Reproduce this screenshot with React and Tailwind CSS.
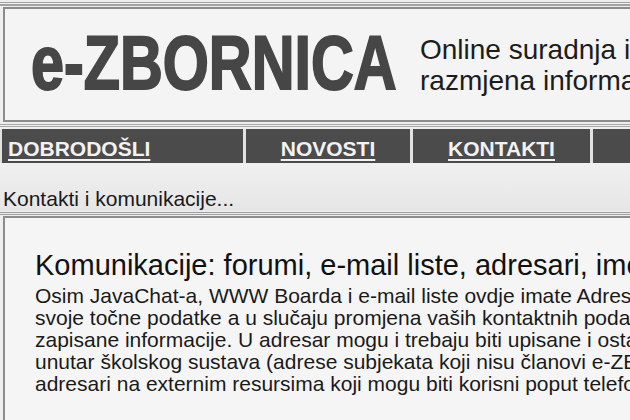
export default function App() {
  const navItems = [
    { label: 'DOBRODOŠLI', width: 'w-[241px]', align: 'justify-start pl-[6px]' },
    { label: 'NOVOSTI', width: 'w-[164px]', align: 'justify-center' },
    { label: 'KONTAKTI', width: 'w-[177px]', align: 'justify-center' },
    { label: 'O NAMA', width: 'w-[200px]', align: 'justify-center' },
  ];

  return (
    <div className="w-[630px] h-[420px] overflow-hidden bg-[#eeeeee] font-['Liberation_Sans',Arial,sans-serif]">
      <div className="w-[1000px]">
        {/* top rule */}
        <div className="h-[7px] pt-[2px]">
          <div className="h-[4px] border-t border-b-2 border-[#a3a3a3]" />
        </div>

        {/* header */}
        <div className="ml-[3px] h-[115px] border-2 border-r-0 border-[#8c8c8c] bg-[#f4f4f4] flex items-start">
          <div className="w-[415px] pl-[26px] pt-[16px] shrink-0">
            <div className="origin-left scale-x-[0.78] text-[76px] leading-[76px] font-bold text-[#464646] [-webkit-text-stroke:2px_#464646] whitespace-nowrap">
              e-ZBORNICA
            </div>
          </div>
          <div className="pt-[25px] text-[28px] leading-[31px] text-[#1c1c1c] whitespace-nowrap">
            <div>Online suradnja i</div>
            <div>razmjena informacija</div>
          </div>
        </div>

        {/* rule under header */}
        <div className="h-[7px] pt-[2px]">
          <div className="h-[3px] border-t border-b border-[#a8a8a8]" />
        </div>

        {/* navigation */}
        <div className="flex gap-[3px] pl-[2px] bg-[#e2e2e2]">
          {navItems.map((item) => (
            <div
              key={item.label}
              className={`${item.width} h-[34px] bg-[#4b4b4b] flex items-center ${item.align} pt-[5px]`}
            >
              <span className="text-[21px] leading-[24px] font-bold text-[#f2f2f2] underline decoration-2 underline-offset-[3px]">
                {item.label}
              </span>
            </div>
          ))}
        </div>

        {/* breadcrumb band */}
        <div className="h-[48px] bg-gradient-to-b from-[#f0f0f0] to-[#e6e6e6] flex items-end pl-[3px]">
          <span className="text-[21px] leading-[24px] text-[#1a1a1a]">Kontakti i komunikacije...</span>
        </div>

        {/* rule */}
        <div className="h-[5px] pt-[1px]">
          <div className="h-[3px] border-t border-b border-[#9c9c9c]" />
        </div>

        {/* content */}
        <div className="ml-[3px] h-[300px] border-2 border-r-0 border-b-0 border-[#8c8c8c] bg-[#f5f5f5] pl-[30px] pt-[31px]">
          <h1 className="mb-[4px] text-[29px] leading-[32px] text-[#111] whitespace-nowrap">
            Komunikacije: forumi, e-mail liste, adresari, imenici
          </h1>
          <div className="text-[21px] leading-[22px] text-[#1a1a1a] whitespace-nowrap">
            <div>Osim JavaChat-a, WWW Boarda i e-mail liste ovdje imate Adresar u koji upisujete</div>
            <div>svoje točne podatke a u slučaju promjena vaših kontaktnih podataka ažurirate</div>
            <div>zapisane informacije. U adresar mogu i trebaju biti upisane i ostale adrese</div>
            <div>unutar školskog sustava (adrese subjekata koji nisu članovi e-ZBORNICE) kao i</div>
            <div>adresari na externim resursima koji mogu biti korisni poput telefonskih imenika.</div>
          </div>
        </div>
      </div>
    </div>
  );
}
